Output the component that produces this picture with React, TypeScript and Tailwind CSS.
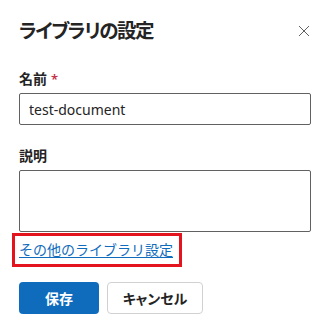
import React, { useState } from "react";

const font = "font-['Noto_Sans','Noto_Sans_CJK_JP',sans-serif]";
const palt = "[font-feature-settings:'palt']";

export default function App() {
  const [name, setName] = useState("test-document");
  const [desc, setDesc] = useState("");

  return (
    <div className={`w-[330px] h-[327px] bg-white text-[#242424] ${font}`}>
      <div className="flex items-center justify-between pl-[19px] pr-[19px] pt-[16px]">
        <h1 className={`text-[19.5px] leading-[29px] font-semibold tracking-[-1.5px] ${palt}`}>
          ライブラリの設定
        </h1>
        <button className="w-[12px] h-[12px] mr-[1px] text-[#616161]" aria-label="閉じる">
          <svg viewBox="0 0 12 12" className="w-[12px] h-[12px]">
            <path d="M1 1L11 11M11 1L1 11" stroke="currentColor" strokeWidth="1" fill="none" />
          </svg>
        </button>
      </div>

      <div className="px-[19px] pt-[24px]">
        <label className={`flex text-[14px] leading-[20px] font-semibold ${palt}`}>
          名前
          <span className="ml-[4px] text-[13px] text-[#c4314b]">*</span>
        </label>
        <input
          value={name}
          onChange={(e) => setName(e.target.value)}
          className="mt-[4px] w-full h-[32px] border border-[#616161] rounded-[2px] px-[9px] text-[14px] outline-none"
        />

        <label className={`block mt-[21px] text-[14px] leading-[20px] font-semibold ${palt}`}>
          説明
        </label>
        <textarea
          value={desc}
          onChange={(e) => setDesc(e.target.value)}
          className="block mt-[4px] w-full h-[62px] border border-[#616161] rounded-[2px] resize-none outline-none"
        />

        <div className="mt-[1px] -ml-[7px] w-fit border-[3px] border-[#e3141e] pl-[4px] pr-[6px] py-[4px]">
          <a href="#" className="block text-[14px] leading-[20px] text-[#0f6cbd] underline underline-offset-2">
            その他のライブラリ設定
          </a>
        </div>

        <div className={`flex gap-[8px] mt-[15px] ${palt}`}>
          <button className="w-[80px] h-[32px] rounded-[4px] bg-[#0f6cbd] text-white text-[14px] font-semibold">
            保存
          </button>
          <button className="w-[96px] h-[32px] rounded-[4px] border border-[#d1d1d1] bg-white text-[14px] font-semibold">
            キャンセル
          </button>
        </div>
      </div>
    </div>
  );
}
